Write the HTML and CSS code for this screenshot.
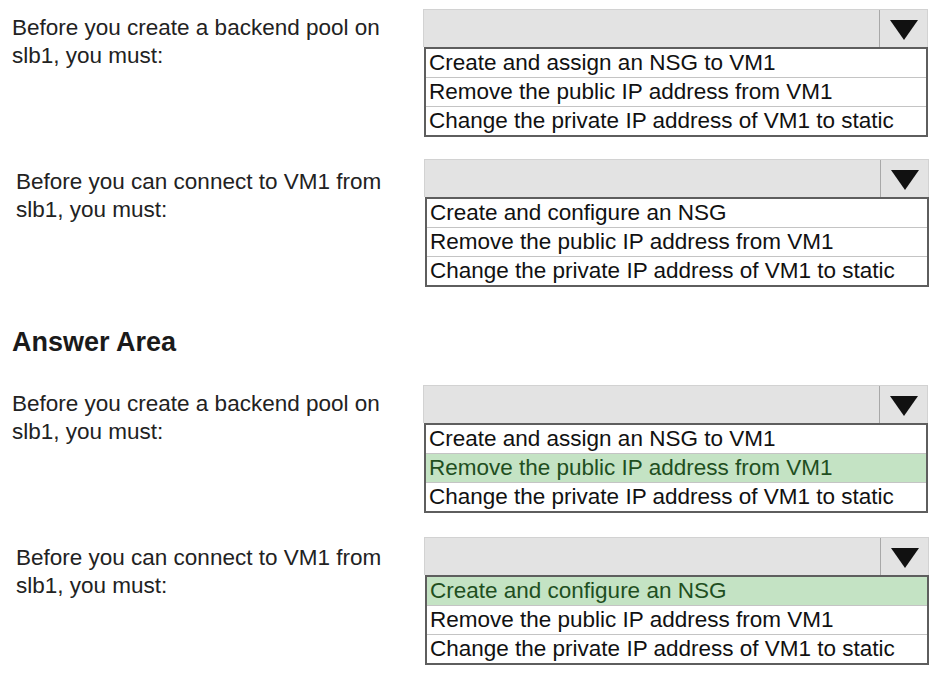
FILE: index.html
```html
<!DOCTYPE html>
<html>
<head>
<meta charset="utf-8">
<link rel="stylesheet" href="styles.css">
</head>
<body>
<div class="page">
  <div class="q q1">
    <div class="label">Before you create a backend pool on<br>slb1, you must:</div>
    <div class="dd">
      <div class="dd-head"><div class="dd-field"></div><div class="dd-arrow"><svg width="28" height="20" viewBox="0 0 28 20"><polygon points="0,0 28,0 14,20" fill="#111"/></svg></div></div>
      <div class="dd-list">
        <div class="opt">Create and assign an NSG to VM1</div>
        <div class="opt">Remove the public IP address from VM1</div>
        <div class="opt">Change the private IP address of VM1 to static</div>
      </div>
    </div>
  </div>
  <div class="q q2">
    <div class="label label-b">Before you can connect to VM1 from<br>slb1, you must:</div>
    <div class="dd">
      <div class="dd-head"><div class="dd-field"></div><div class="dd-arrow"><svg width="28" height="20" viewBox="0 0 28 20"><polygon points="0,0 28,0 14,20" fill="#111"/></svg></div></div>
      <div class="dd-list">
        <div class="opt">Create and configure an NSG</div>
        <div class="opt">Remove the public IP address from VM1</div>
        <div class="opt">Change the private IP address of VM1 to static</div>
      </div>
    </div>
  </div>
  <h2 class="title">Answer Area</h2>
  <div class="q q3">
    <div class="label">Before you create a backend pool on<br>slb1, you must:</div>
    <div class="dd">
      <div class="dd-head"><div class="dd-field"></div><div class="dd-arrow"><svg width="28" height="20" viewBox="0 0 28 20"><polygon points="0,0 28,0 14,20" fill="#111"/></svg></div></div>
      <div class="dd-list">
        <div class="opt">Create and assign an NSG to VM1</div>
        <div class="opt sel">Remove the public IP address from VM1</div>
        <div class="opt">Change the private IP address of VM1 to static</div>
      </div>
    </div>
  </div>
  <div class="q q4">
    <div class="label label-b">Before you can connect to VM1 from<br>slb1, you must:</div>
    <div class="dd">
      <div class="dd-head"><div class="dd-field"></div><div class="dd-arrow"><svg width="28" height="20" viewBox="0 0 28 20"><polygon points="0,0 28,0 14,20" fill="#111"/></svg></div></div>
      <div class="dd-list">
        <div class="opt sel">Create and configure an NSG</div>
        <div class="opt">Remove the public IP address from VM1</div>
        <div class="opt">Change the private IP address of VM1 to static</div>
      </div>
    </div>
  </div>
</div>
</body>
</html>
```
FILE: styles.css
```css
html, body {
  margin: 0;
  padding: 0;
  background: #ffffff;
}
.page {
  padding: 9px 0 0 12px;
  font-family: "Liberation Sans", Arial, sans-serif;
  color: #1c1c1c;
}
.q {
  display: flex;
  align-items: flex-start;
}
.q2 {
  margin-top: 22px;
}
.q4 {
  margin-top: 24px;
}
.label {
  width: 411px;
  font-size: 22.5px;
  line-height: 28px;
  padding-top: 5px;
  color: #222;
}
.label-b {
  padding-left: 4px;
  width: 408px;
  padding-top: 9px;
}
.q4 .label-b {
  padding-top: 7px;
}
.dd {
  width: 505px;
}
.dd-head {
  display: flex;
  height: 38px;
  background: #e3e3e3;
  border: 1px solid #d2d2d2;
  border-bottom: none;
  box-sizing: border-box;
}
.dd-field {
  flex: 1;
}
.dd-arrow {
  width: 48px;
  border-left: 1px solid #a8a8a8;
  display: flex;
  justify-content: center;
  align-items: center;
  padding-top: 3px;
  box-sizing: border-box;
}
.dd-list {
  border: 2px solid #5e5e5e;
  margin-left: 1px;
}
.opt {
  height: 28px;
  line-height: 28px;
  font-size: 22.5px;
  padding-left: 3px;
  color: #111;
  white-space: nowrap;
}
.opt + .opt {
  border-top: 1px solid #c4c4c4;
}
.opt.sel {
  background: #c4e3c4;
  color: #1f4f1f;
}
.title {
  margin: 0;
  font-size: 27px;
  line-height: 34px;
  font-weight: bold;
  color: #1a1a1a;
  padding-top: 38px;
  padding-bottom: 26px;
}
```
